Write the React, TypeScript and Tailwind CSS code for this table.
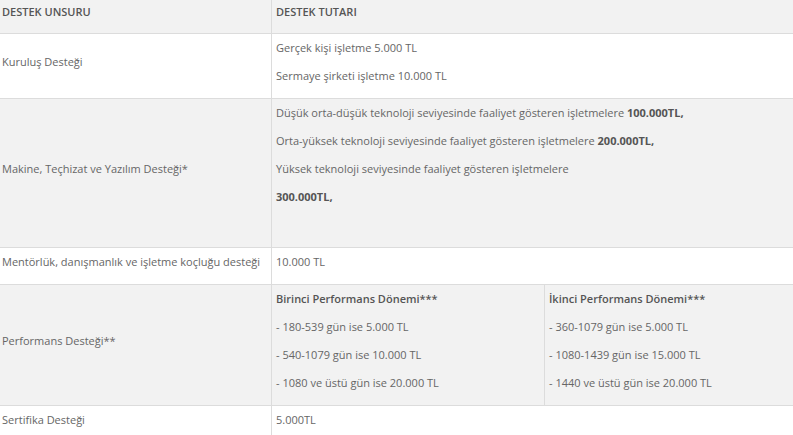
type Row = {
  label: string;
  gray?: boolean;
  content: React.ReactNode;
};

function P({ children }: { children?: React.ReactNode }) {
  return <p className="mb-[10px] leading-[18px]">{children}</p>;
}

function Cell({ children }: { children: React.ReactNode }) {
  return <div className="pt-[5px] pb-[3px] pl-[4px]">{children}</div>;
}

const rows: Row[] = [
  {
    label: "Kuruluş Desteği",
    content: (
      <Cell>
        <P>Gerçek kişi işletme 5.000 TL</P>
        <P>Sermaye şirketi işletme 10.000 TL</P>
      </Cell>
    ),
  },
  {
    label: "Makine, Teçhizat ve Yazılım Desteği*",
    gray: true,
    content: (
      <Cell>
        <P>
          Düşük orta-düşük teknoloji seviyesinde faaliyet gösteren işletmelere{" "}
          <b className="font-bold text-[#555]">100.000TL,</b>
        </P>
        <P>
          Orta-yüksek teknoloji seviyesinde faaliyet gösteren işletmelere{" "}
          <b className="font-bold text-[#555]">200.000TL,</b>
        </P>
        <P>Yüksek teknoloji seviyesinde faaliyet gösteren işletmelere</P>
        <P>
          <b className="font-bold text-[#555]">300.000TL,</b>
        </P>
        <P>&nbsp;</P>
      </Cell>
    ),
  },
  {
    label: "Mentörlük, danışmanlık ve işletme koçluğu desteği",
    content: (
      <Cell>
        <P>10.000 TL</P>
      </Cell>
    ),
  },
  {
    label: "Performans Desteği**",
    gray: true,
    content: (
      <div className="grid grid-cols-[272px_1fr]">
        <Cell>
          <P>
            <b className="font-semibold text-[#555]">Birinci Performans Dönemi***</b>
          </P>
          <P>- 180-539 gün ise 5.000 TL</P>
          <P>- 540-1079 gün ise 10.000 TL</P>
          <P>- 1080 ve üstü gün ise 20.000 TL</P>
        </Cell>
        <div className="border-l border-[#dcdcdc]">
          <Cell>
            <P>
              <b className="font-semibold text-[#555]">İkinci Performans Dönemi***</b>
            </P>
            <P>- 360-1079 gün ise 5.000 TL</P>
            <P>- 1080-1439 gün ise 15.000 TL</P>
            <P>- 1440 ve üstü gün ise 20.000 TL</P>
          </Cell>
        </div>
      </div>
    ),
  },
  {
    label: "Sertifika Desteği",
    content: (
      <Cell>
        <P>5.000TL</P>
      </Cell>
    ),
  },
];

export default function App() {
  return (
    <div className="w-[793px] h-[435px] overflow-hidden bg-white text-[11px] text-[#666] font-['Open_Sans',sans-serif]">
      <div className="grid grid-cols-[271px_1fr] bg-[#f2f2f2] border-b border-[#dcdcdc] h-[34px] font-semibold text-[#555]">
        <div className="pt-[3px] pl-[2px] leading-[18px]">DESTEK UNSURU</div>
        <div className="pt-[3px] pl-[4px] leading-[18px] border-l border-[#dcdcdc]">DESTEK TUTARI</div>
      </div>
      {rows.map((row) => (
        <div
          key={row.label}
          className={`grid grid-cols-[271px_1fr] border-b border-[#dcdcdc] ${row.gray ? "bg-[#f2f2f2]" : "bg-white"}`}
        >
          <div className="flex flex-col justify-center pt-[5px] pb-[3px] pl-[2px]">
            <P>{row.label}</P>
          </div>
          <div className="border-l border-[#dcdcdc]">{row.content}</div>
        </div>
      ))}
    </div>
  );
}
